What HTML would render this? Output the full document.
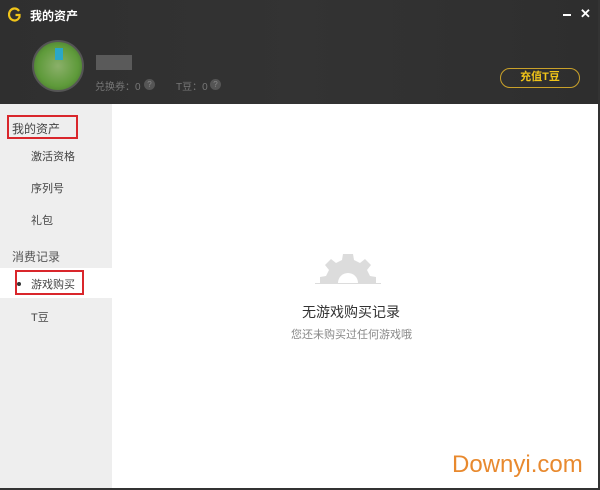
<!DOCTYPE html>
<html><head><meta charset="utf-8"><style>
*{margin:0;padding:0;box-sizing:border-box}
body{width:600px;height:490px;overflow:hidden;background:#fff;font-family:"Liberation Sans","Noto Sans CJK SC",sans-serif;position:relative}
.hd{position:absolute;left:0;top:0;width:600px;height:104px;background:linear-gradient(90deg,#2f2f2f,#333 50%,#2e2e2e)}
.t{position:absolute;color:#fff;font-size:12px;font-weight:bold;left:30px;top:7px}
.sb{position:absolute;left:0;top:104px;width:112px;height:384px;background:#eeeeee}
.s{position:absolute;font-size:11px;color:#444}
.box{position:absolute;border:2px solid #d9262b}
</style></head><body>
<div class="hd">
 <svg style="position:absolute;left:8px;top:7px" width="14" height="16" viewBox="0 0 14 16"><path d="M11 4 A5.5 6 0 1 0 11.5 10 L11.5 8 L7.5 8" fill="none" stroke="#f0c419" stroke-width="2.2"/></svg>
 <div class="t">我的资产</div>
 <div style="position:absolute;left:563px;top:14px;width:8px;height:2px;background:#fff"></div>
 <div style="position:absolute;left:580px;top:6px;color:#fff;font-size:13px;font-weight:bold">✕</div>
 <div style="position:absolute;left:32px;top:40px;width:52px;height:52px;border-radius:50%;background:radial-gradient(circle at 50% 50%,#8bb06a,#5e9a3a 60%,#3c5f2b);border:2px solid #555"></div>
 <div style="position:absolute;left:55px;top:48px;width:8px;height:12px;background:#2aa7c8"></div>
 <div style="position:absolute;left:96px;top:55px;width:36px;height:15px;background:#5a5a5a"></div>
 <div style="position:absolute;left:95px;top:78px;color:#777;font-size:10px">兑换券：0</div>
 <div style="position:absolute;left:144px;top:79px;width:11px;height:11px;border-radius:50%;background:#555;color:#888;font-size:8px;text-align:center;line-height:11px">?</div>
 <div style="position:absolute;left:176px;top:78px;color:#777;font-size:10px">T豆：0</div>
 <div style="position:absolute;left:210px;top:79px;width:11px;height:11px;border-radius:50%;background:#555;color:#888;font-size:8px;text-align:center;line-height:11px">?</div>
 <div style="position:absolute;left:500px;top:68px;width:80px;height:20px;border:1.5px solid #c9a12a;border-radius:10px;color:#f0c419;font-size:11px;font-weight:bold;text-align:center;line-height:17px">充值T豆</div>
</div>
<div class="sb">
 <div class="s" style="left:12px;top:16px;font-size:12px">我的资产</div>
 <div class="box" style="left:7px;top:11px;width:71px;height:24px"></div>
 <div class="s" style="left:31px;top:44px">激活资格</div>
 <div class="s" style="left:31px;top:76px">序列号</div>
 <div class="s" style="left:31px;top:108px">礼包</div>
 <div class="s" style="left:12px;top:144px;font-size:12px;color:#555">消费记录</div>
 <div style="position:absolute;left:0;top:164px;width:112px;height:30px;background:#fff"></div>
 <div style="position:absolute;left:17px;top:178px;width:4px;height:4px;border-radius:50%;background:#333"></div>
 <div class="s" style="left:31px;top:172px">游戏购买</div>
 <div class="box" style="left:15px;top:166px;width:69px;height:25px"></div>
 <div class="s" style="left:31px;top:205px">T豆</div>
</div>
<svg style="position:absolute;left:310px;top:250px" width="76" height="36" viewBox="0 0 76 36">
 <path d="M38 4 L33 4 L32 10 L26 13 L21 9 L15 15 L19 20 L16 26 L10 27 L10 33 L28 33 A10 10 0 0 1 48 33 L66 33 L66 27 L60 26 L57 20 L61 15 L55 9 L50 13 L44 10 L43 4 Z" fill="#dcdcdc"/>
 <rect x="5" y="33" width="66" height="1" fill="#dcdcdc"/>
</svg>
<div style="position:absolute;left:302px;top:302px;font-size:14px;color:#333">无游戏购买记录</div>
<div style="position:absolute;left:291px;top:326px;font-size:11px;color:#888">您还未购买过任何游戏哦</div>
<div style="position:absolute;left:452px;top:451px;font-size:24px;color:#e8892e;font-family:'Liberation Sans',sans-serif">Downyi.com</div>
<div style="position:absolute;left:598px;top:0;width:2px;height:490px;background:#333"></div>
<div style="position:absolute;left:0;top:488px;width:600px;height:2px;background:#333"></div>
</body></html>
